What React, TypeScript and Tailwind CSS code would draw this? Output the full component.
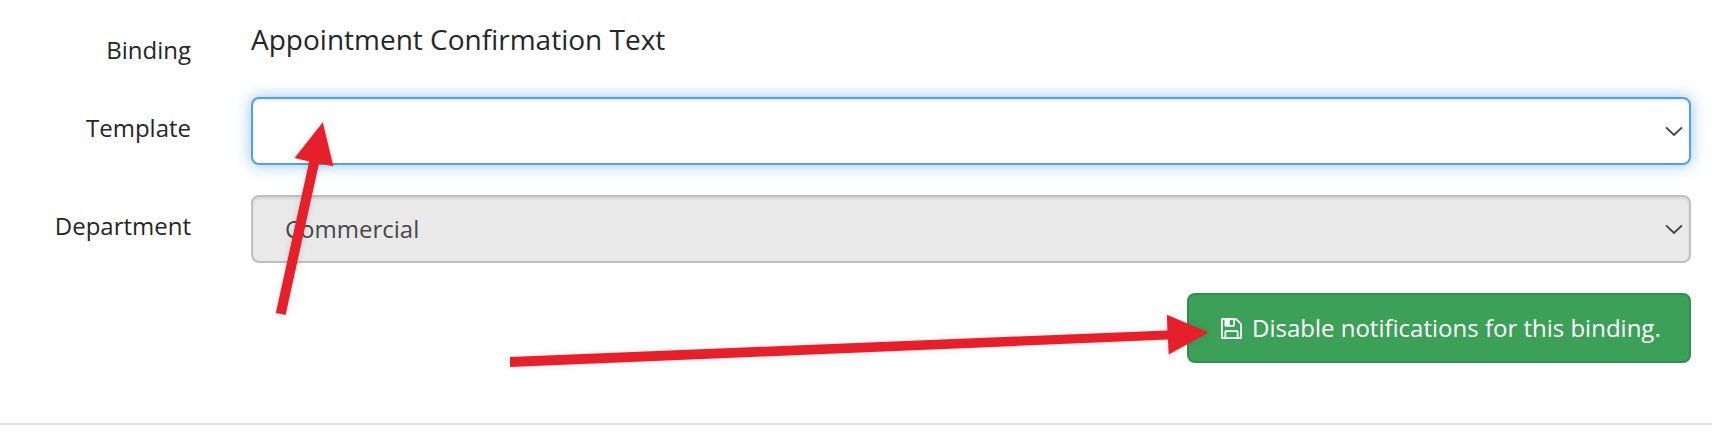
import { useState, type ReactNode } from 'react';

const departments = ['Commercial'];

function Chevron() {
  return (
    <svg className="w-[18px] h-[11px] mr-[6px]" viewBox="0 0 18 11" fill="none">
      <path d="M1 1.4 L9 9 L17 1.4" stroke="#444444" strokeWidth="1.9" />
    </svg>
  );
}

function SaveIcon() {
  return (
    <svg className="w-[21px] h-[21px]" viewBox="0 128 1536 1536" fill="currentColor">
      <path d="M384 1536h768v-384h-768v384zm896 0h128v-896q0-14-10-38.5t-20-34.5l-281-281q-10-10-34-20t-39-10v416q0 40-28 68t-68 28h-576q-40 0-68-28t-28-68v-416h-128v1280h128v-416q0-40 28-68t68-28h832q40 0 68 28t28 68v416zm-384-928v-320q0-13-9.5-22.5t-22.5-9.5h-192q-13 0-22.5 9.5t-9.5 22.5v320q0 13 9.5 22.5t22.5 9.5h192q13 0 22.5-9.5t9.5-22.5zm640 32v928q0 40-28 68t-68 28h-1344q-40 0-68-28t-28-68v-1344q0-40 28-68t68-28h928q40 0 88 20t76 48l280 280q28 28 48 76t20 88z" />
    </svg>
  );
}

function Row({ label, children }: { label: string; children: ReactNode }) {
  return (
    <div className="flex gap-[60px]">
      <div className="w-[191px] shrink-0 pt-[14px] text-right text-2xl leading-[34px]">{label}</div>
      <div className="flex-1">{children}</div>
    </div>
  );
}

// Red pointers drawn over the form
function Arrows() {
  return (
    <svg
      className="absolute inset-0 w-[1712px] h-[448px] pointer-events-none drop-shadow-[0_0_3px_rgba(0,0,0,0.12)]"
      viewBox="0 0 1712 448"
      fill="#e5202b"
    >
      <polygon points="322.8,122.3 333.4,166.2 319,163.4 285.6,315 275.8,313 309.2,161.4 294.6,158" />
      <polygon points="1208.6,332.6 1168.7,354.6 1168,339.6 510,367 510,357 1167.4,330.4 1166.9,314.8" />
    </svg>
  );
}

export default function App() {
  const [department] = useState(departments[0]);

  return (
    <div className="relative h-[448px] overflow-hidden bg-white font-['Open_Sans',sans-serif] text-[#262626]">
      <div className="pr-[21px]">
        <div className="flex gap-[60px] h-[97px]">
          <div className="w-[191px] shrink-0 pt-[33px] text-right text-2xl leading-[34px]">Binding</div>
          <h1 className="pt-[19px] text-[28px] leading-[40px]">Appointment Confirmation Text</h1>
        </div>

        <div className="flex flex-col gap-[30px]">
          <Row label="Template">
            <button className="flex h-[68px] w-full items-center justify-end rounded-lg border-2 border-[#549fe5] bg-white shadow-[inset_0_2px_2px_rgba(0,0,0,0.075),0_0_16px_rgba(82,158,228,0.6)]">
              <Chevron />
            </button>
          </Row>
          <Row label="Department">
            <button
              disabled
              className="flex h-[68px] w-full items-center justify-between rounded-lg border-2 border-[#bfbfbf] bg-[#e9e9e9] pl-8 text-2xl text-[#484848] shadow-[inset_0_2px_2px_rgba(0,0,0,0.075)]"
            >
              <span>{department}</span>
              <Chevron />
            </button>
          </Row>
        </div>

        <div className="mt-[30px] flex justify-end">
          <button className="flex h-[70px] w-[504px] items-center gap-[10px] rounded-lg border-2 border-[#338e4e] bg-[#3ca058] pl-8 text-2xl whitespace-nowrap text-white">
            <SaveIcon />
            <span>Disable notifications for this binding.</span>
          </button>
        </div>
      </div>
      <hr className="mt-[60px] border-t-2 border-[#dddddd]" />
      <Arrows />
    </div>
  );
}
